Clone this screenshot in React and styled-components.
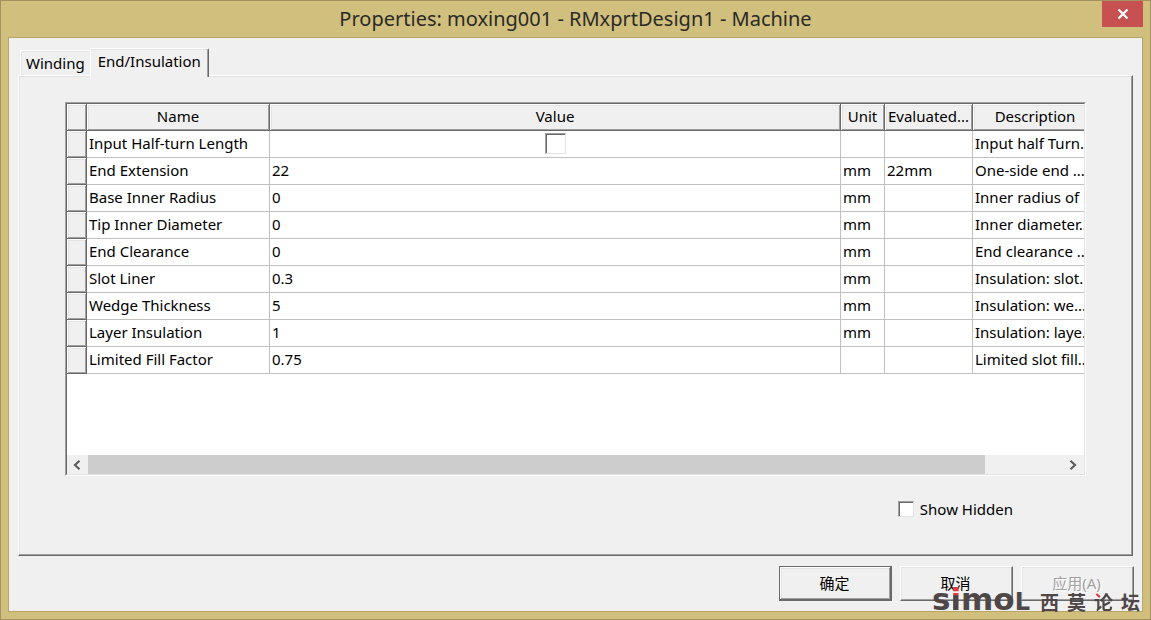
import React, { useState } from "react";
// styled component
import styled, { createGlobalStyle } from "styled-components";

const rows = [
  { name: "Input Half-turn Length", check: true, desc: "Input half Turn..." },
  {
    name: "End Extension",
    value: "22",
    unit: "mm",
    evaluated: "22mm",
    desc: "One-side end ...",
  },
  { name: "Base Inner Radius", value: "0", unit: "mm", desc: "Inner radius of ..." },
  { name: "Tip Inner Diameter", value: "0", unit: "mm", desc: "Inner diameter..." },
  { name: "End Clearance", value: "0", unit: "mm", desc: "End clearance ..." },
  { name: "Slot Liner", value: "0.3", unit: "mm", desc: "Insulation: slot..." },
  { name: "Wedge Thickness", value: "5", unit: "mm", desc: "Insulation: we..." },
  { name: "Layer Insulation", value: "1", unit: "mm", desc: "Insulation: laye..." },
  { name: "Limited Fill Factor", value: "0.75", desc: "Limited slot fill..." },
];

const tabs = ["Winding", "End/Insulation"];

const App = () => {
  const [tab, setTab] = useState("End/Insulation"); // state control tab
  const [halfTurn, setHalfTurn] = useState(false); // state control half-turn
  const [showHidden, setShowHidden] = useState(false); // state control hidden rows

  return (
    <>
      <GlobalStyle />
      <Window>
        <TitleBar>
          <Title>Properties: moxing001 - RMxprtDesign1 - Machine</Title>
          <CloseButton type="button" aria-label="Close">
            <svg width="12" height="10" viewBox="0 0 12 10">
              <path d="M1.5 0.5L10.5 9.5M10.5 0.5L1.5 9.5" />
            </svg>
          </CloseButton>
        </TitleBar>

        <Client>
          {/* tabs */}
          <TabList role="tablist">
            {tabs.map((item) => (
              <Tab
                key={item}
                type="button"
                role="tab"
                aria-selected={tab === item}
                $active={tab === item}
                onClick={() => setTab(item)}
              >
                {item}
              </Tab>
            ))}
          </TabList>

          <TabPage role="tabpanel">
            <GridBox>
              <GridView>
                <Table>
                  <colgroup>
                    <Col $width={20} />
                    <Col $width={183} />
                    <Col />
                    <Col $width={44} />
                    <Col $width={88} />
                    <Col $width={125} />
                  </colgroup>
                  <thead>
                    <tr>
                      <HeadCell />
                      <HeadCell>Name</HeadCell>
                      <HeadCell>Value</HeadCell>
                      <HeadCell>Unit</HeadCell>
                      <HeadCell>Evaluated...</HeadCell>
                      <HeadCell>Description</HeadCell>
                    </tr>
                  </thead>
                  <tbody>
                    {rows.map((row) => (
                      <tr key={row.name}>
                        <HeadCell as="td" />
                        <Cell>{row.name}</Cell>
                        <Cell $center={row.check}>
                          {row.check ? (
                            <CheckBox
                              type="checkbox"
                              aria-label={row.name}
                              $size={21}
                              checked={halfTurn}
                              onChange={() => setHalfTurn((state) => !state)}
                            />
                          ) : (
                            row.value
                          )}
                        </Cell>
                        <Cell>{row.unit}</Cell>
                        <Cell>{row.evaluated}</Cell>
                        <Cell>{row.desc}</Cell>
                      </tr>
                    ))}
                  </tbody>
                </Table>
              </GridView>
              {/* horizontal scroll bar */}
              <ScrollBar>
                <ScrollButton type="button" aria-label="Scroll left">
                  <svg width="8" height="10" viewBox="0 0 8 10">
                    <path d="M6.5 0.8L2 5L6.5 9.2" />
                  </svg>
                </ScrollButton>
                <ScrollTrack>
                  <ScrollThumb />
                </ScrollTrack>
                <ScrollButton type="button" aria-label="Scroll right">
                  <svg width="8" height="10" viewBox="0 0 8 10">
                    <path d="M1.5 0.8L6 5L1.5 9.2" />
                  </svg>
                </ScrollButton>
              </ScrollBar>
            </GridBox>

            <HiddenRow>
              <HiddenLabel>
                <CheckBox
                  type="checkbox"
                  $size={16}
                  checked={showHidden}
                  onChange={() => setShowHidden((state) => !state)}
                />
                Show Hidden
              </HiddenLabel>
            </HiddenRow>
          </TabPage>

          {/* buttons */}
          <Footer>
            <Button type="button" $primary>
              确定
            </Button>
            <Button type="button">取消</Button>
            <Button type="button" disabled>
              应用(A)
            </Button>
          </Footer>
        </Client>

        {/* forum mark */}
        <ForumMark>
          <Latin>
            s<DottedLetter>i</DottedLetter>mo<SmallCap>L</SmallCap>
          </Latin>
          <Chinese>
            <span>西</span>
            <span>莫</span>
            <DottedGlyph>论</DottedGlyph>
            <span>坛</span>
          </Chinese>
        </ForumMark>
      </Window>
    </>
  );
};

export default App;

const GlobalStyle = createGlobalStyle`
  * {
    box-sizing: border-box;
  }

  body {
    margin: 0;
    color: #000;
    font-family: "Noto Sans", "Noto Sans CJK SC", sans-serif;
    font-size: 15px;
    line-height: 20px;
  }

  button, input {
    margin: 0;
    padding: 0;
    border: 0;
    color: inherit;
    font: inherit;
  }
`;

const Window = styled.div`
  position: relative;
  display: flex;
  flex-direction: column;
  min-height: 100vh;
  padding: 0 7px 7px;
  border: 1px solid #a3925f;
  background: #d1bf7d;
`;

const TitleBar = styled.header`
  position: relative;
  display: flex;
  justify-content: center;
  height: 36px;
`;

const Title = styled.h1`
  margin: 0;
  color: #2a2a28;
  font-size: 20px;
  font-weight: 400;
  line-height: 36px;
`;

const CloseButton = styled.button`
  position: absolute;
  top: 0;
  right: 0;
  display: flex;
  align-items: center;
  justify-content: center;
  width: 41px;
  height: 26px;
  background: #c75050;

  path {
    fill: none;
    stroke: #fff;
    stroke-width: 2.2;
  }
`;

const Client = styled.main`
  display: flex;
  flex: 1;
  flex-direction: column;
  padding: 10px 8px 10px 9px;
  border: 1px solid #b8a566;
  background: #f0f0f0;
`;

const TabList = styled.div`
  display: flex;
  align-items: flex-end;
  height: 27px;
  padding-left: 2px;
`;

const Tab = styled.button`
  position: relative;
  height: ${(props) => (props.$active ? 29 : 25)}px;
  margin-bottom: ${(props) => (props.$active ? -2 : 0)}px;
  padding: ${(props) => (props.$active ? "0 7px 4px" : "0 5px")};
  border: solid;
  border-width: ${(props) => (props.$active ? "1px 1px 0 1px" : "1px 0 0 1px")};
  border-color: #fff #696969 #fff #fff;
  border-radius: 2px 2px 0 0;
  background: #f0f0f0;
  box-shadow: ${(props) =>
    props.$active
      ? "inset -1px 0 #a0a0a0, inset 0 1px #e3e3e3"
      : "inset 1px 1px #e3e3e3"};
`;

const TabPage = styled.section`
  display: flex;
  flex: 1;
  flex-direction: column;
  margin-right: 1px;
  padding: 26px 46px 36px;
  border: 1px solid;
  border-color: #fff #696969 #696969 #fff;
  box-shadow:
    inset -1px -1px #a0a0a0,
    inset 1px 1px #e3e3e3;
`;

const GridBox = styled.div`
  display: flex;
  flex: 1;
  flex-direction: column;
  border: 1px solid;
  border-color: #a0a0a0 #fff #fff #a0a0a0;
`;

const GridView = styled.div`
  flex: 1;
  overflow: hidden;
  border: 1px solid;
  border-color: #696969 #e3e3e3 #fff #696969;
  border-bottom: 0;
  background: #fff;
`;

const Table = styled.table`
  width: calc(100% + 14px);
  border-collapse: separate;
  border-spacing: 0;
  table-layout: fixed;
`;

const Col = styled.col`
  width: ${(props) => (props.$width ? `${props.$width}px` : "auto")};
`;

const HeadCell = styled.th`
  height: 27px;
  padding: 0 3px 3px 2px;
  background: #f0f0f0;
  box-shadow:
    inset -1px -1px #696969,
    inset 1px 1px #fff,
    inset -2px -2px #a0a0a0,
    inset 2px 2px #e3e3e3;
  font-weight: 400;
  white-space: nowrap;
`;

const Cell = styled.td`
  height: 27px;
  padding: 0 2px 2px;
  border-right: 1px solid #c0c0c0;
  border-bottom: 1px solid #c0c0c0;
  overflow: hidden;
  text-align: ${(props) => (props.$center ? "center" : "left")};
  white-space: nowrap;
`;

const CheckBox = styled.input`
  appearance: none;
  width: ${(props) => props.$size}px;
  height: ${(props) => props.$size}px;
  border: 1px solid;
  border-color: #a0a0a0 #e3e3e3 #e3e3e3 #a0a0a0;
  background: #fff;
  box-shadow: inset 1px 1px #696969;
  vertical-align: middle;

  &:checked {
    background: #696969;
  }
`;

const ScrollBar = styled.div`
  display: flex;
  height: 20px;
  border: solid;
  border-width: 0 1px 1px;
  border-color: #e3e3e3 #e3e3e3 #e3e3e3 #696969;
  background: #f0f0f0;
`;

const ScrollButton = styled.button`
  display: flex;
  align-items: center;
  justify-content: center;
  width: 21px;
  padding-right: 2px;
  background: #f0f0f0;

  path {
    fill: none;
    stroke: #606060;
    stroke-width: 2.2;
  }
`;

const ScrollTrack = styled.div`
  display: flex;
  flex: 1;
`;

const ScrollThumb = styled.div`
  width: 92%;
  background: #cdcdcd;
`;

const HiddenRow = styled.div`
  display: flex;
  justify-content: flex-end;
  padding: 23px 73px 0 0;
`;

const HiddenLabel = styled.label`
  display: flex;
  align-items: center;
  gap: 6px;
`;

const Footer = styled.footer`
  display: flex;
  justify-content: flex-end;
  gap: 8px;
  margin-top: 10px;
`;

const Button = styled.button`
  width: 113px;
  height: 35px;
  padding: 0 2px 2px 0;
  border: 1px solid;
  border-color: ${(props) =>
    props.$primary ? "#696969" : "#fff #696969 #696969 #fff"};
  background: #f0f0f0;
  box-shadow: ${(props) =>
    props.$primary
      ? "inset -1px -1px #696969, inset 1px 1px #fff, inset -2px -2px #a0a0a0, inset 2px 2px #e3e3e3"
      : "inset -1px -1px #a0a0a0, inset 1px 1px #e3e3e3"};

  &:disabled {
    color: #a0a0a0;
    text-shadow: 1px 1px #fff;
  }
`;

const ForumMark = styled.div`
  position: absolute;
  right: 10px;
  bottom: 3px;
  display: flex;
  align-items: baseline;
  gap: 10px;
  color: #4f4747;
  line-height: 28px;
  pointer-events: none;
`;

const Latin = styled.span`
  font-family: "DejaVu Sans", sans-serif;
  font-size: 31px;
  font-weight: 700;
`;

const SmallCap = styled.span`
  font-size: 24px;
`;

const Chinese = styled.span`
  display: flex;
  gap: 8px;
  font-family: "Noto Sans CJK SC", sans-serif;
  font-size: 19px;
  font-weight: 700;
`;

const DottedLetter = styled.span`
  background: linear-gradient(#e23c3c 38%, #4f4747 38%);
  background-clip: text;
  color: transparent;
`;

const DottedGlyph = styled.span`
  background: radial-gradient(circle at 4px 7px, #e23c3c 4px, #4f4747 4px);
  background-clip: text;
  color: transparent;
`;
